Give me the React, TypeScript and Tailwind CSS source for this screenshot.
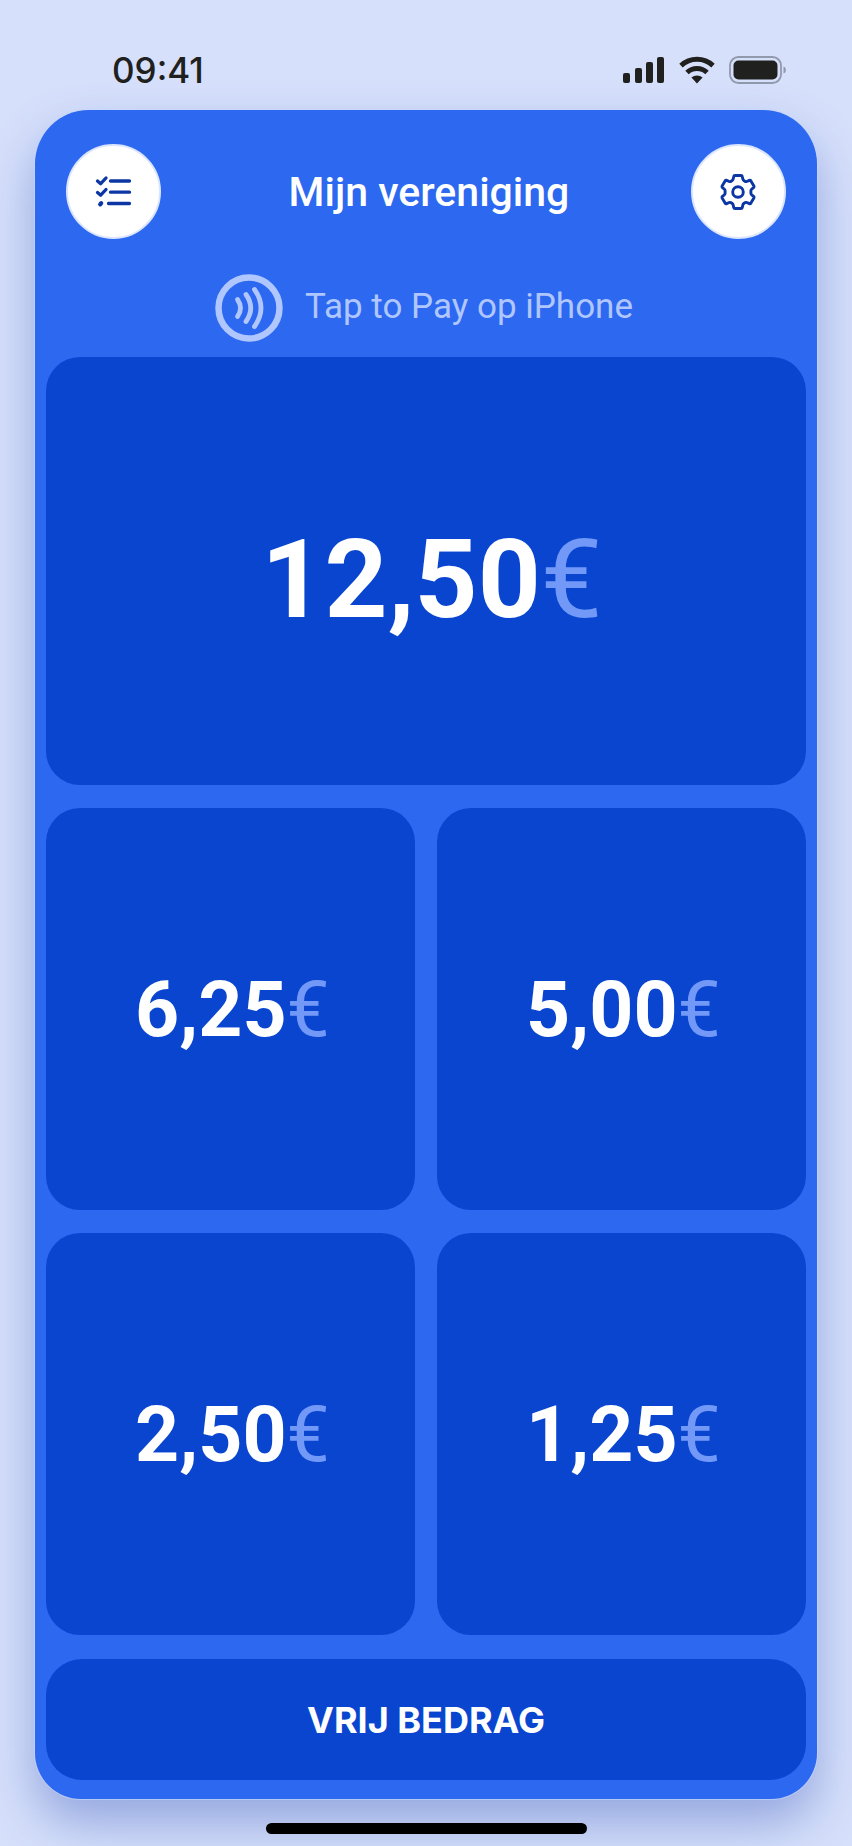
import React from 'react';

const amounts = [
  { id: 'a', value: '12,50', large: true },
  { id: 'b', value: '6,25' },
  { id: 'c', value: '5,00' },
  { id: 'd', value: '2,50' },
  { id: 'e', value: '1,25' },
];

function SignalIcon() {
  return (
    <svg width="42" height="28" viewBox="0 0 42 28" fill="#20201f">
      <rect x="0" y="17" width="7" height="10" rx="2" />
      <rect x="12" y="12" width="7" height="15" rx="2" />
      <rect x="23" y="6" width="7" height="21" rx="2" />
      <rect x="34" y="1" width="7" height="26" rx="2" />
    </svg>
  );
}

function WifiIcon() {
  return (
    <svg width="36" height="28" viewBox="0 0 36 28" fill="none" stroke="#20201f" strokeWidth="5">
      <path d="M2 9.6a23.5 23.5 0 0 1 32 0" />
      <path d="M8 16.5a14.5 14.5 0 0 1 20 0" />
      <path d="M12.4 21.6a8.4 8.4 0 0 1 11.2 0L18 27.4Z" fill="#20201f" stroke="none" />
    </svg>
  );
}

function BatteryIcon() {
  return (
    <svg width="58" height="28" viewBox="0 0 58 28">
      <rect x="1" y="1" width="51" height="26" rx="8.5" fill="none" stroke="#9199ad" strokeWidth="1.8" />
      <rect x="4.5" y="4.5" width="44" height="19" rx="5" fill="#20201f" />
      <path d="M54.5 10.5c3.2 1 3.2 6 0 7Z" fill="#9199ad" />
    </svg>
  );
}

function ChecklistIcon() {
  return (
    <svg width="38" height="34" viewBox="0 0 38 34" fill="none" stroke="#0b36a3" strokeWidth="3.3" strokeLinecap="round" strokeLinejoin="round">
      <path d="M2.500 6 5.700 8.700l5.300-5.700" />
      <path d="M2.500 17.500 5.700 20.200l5.300-5.700" />
      <path d="M5.200 29.400 6.200 28.200" strokeWidth="4.200" />
      <path d="M15.500 6h19M15.500 17.200h19M13.500 28.500h21" />
    </svg>
  );
}

function GearIcon() {
  return (
    <svg width="38" height="38" viewBox="0 0 38 38" fill="none" stroke="#0b36a3" strokeWidth="2.9" strokeLinejoin="round">
      <path d="M16 2.500h6q1.100 0 1.300 1.100l.6 2.700q.2.900 1 1.300l1.300.8q.8.400 1.600.1l2.500-1.100q1-.4 1.600.5l3 5.100q.5.900-.3 1.600l-1.900 1.500q-.8.600-.8 1.600v2.600q0 1 .8 1.600l1.900 1.500q.8.700.3 1.600l-3 5.100q-.6.900-1.600.5l-2.500-1.100q-.8-.3-1.600.1l-1.300.8q-.8.400-1 1.300l-.6 2.700q-.2 1.100-1.300 1.100h-6q-1.100 0-1.300-1.100l-.6-2.700q-.2-.9-1-1.300l-1.300-.8q-.8-.4-1.600-.1l-2.500 1.100q-1 .4-1.600-.5l-3-5.100q-.5-.9.3-1.600l1.900-1.500q.8-.6.800-1.600v-2.600q0-1-.8-1.600l-1.900-1.500q-.8-.7-.3-1.600l3-5.100q.6-.9 1.600-.5l2.500 1.100q.8.300 1.600-.1l1.300-.8q.8-.4 1-1.300l.6-2.700q.2-1.100 1.300-1.100Z" />
      <circle cx="19" cy="19" r="5.300" />
    </svg>
  );
}

function ContactlessIcon() {
  return (
    <svg width="68" height="68" viewBox="0 0 68 68" fill="none" stroke="#b0c6ff" strokeLinecap="round">
      <circle cx="34" cy="34" r="30.5" strokeWidth="6.5" />
      <g strokeWidth="4.8">
        <path d="M22.5 25.5q6 8.500 0 17" />
        <path d="M31 20.500q9.500 13.500 0 27" />
        <path d="M39.500 15.500q13 18.500 0 37" />
      </g>
    </svg>
  );
}

export default function App() {
  return (
    <div className="min-h-screen flex flex-col bg-[#d6e0fb] px-[35px] pt-14 pb-3 font-['Roboto',sans-serif]">
      <header className="h-[54px] flex items-start justify-between pl-[77px] pr-[30px]">
        <span className="font-['Inter',sans-serif] text-[35px] leading-7 font-medium text-[#20201f]">09:41</span>
        <div className="flex items-center gap-[14px]">
          <SignalIcon />
          <WifiIcon />
          <BatteryIcon />
        </div>
      </header>

      <main className="flex-1 flex flex-col bg-[#2c68f0] rounded-t-[54px] rounded-b-[46px] px-[11px] pt-[34px] pb-[19px] shadow-[0_0_0_1px_rgba(200,215,255,0.6),0_24px_48px_rgba(50,80,180,0.4)]">
        <div className="flex items-center justify-between px-5">
          <button aria-label="Transacties" className="size-[95px] rounded-full bg-white border-2 border-[#dbe5ff] flex items-center justify-center">
            <ChecklistIcon />
          </button>
          <h1 className="pl-1.5 text-[41px] leading-[48px] font-medium text-white">Mijn vereniging</h1>
          <button aria-label="Instellingen" className="size-[95px] rounded-full bg-white border-2 border-[#dbe5ff] flex items-center justify-center">
            <GearIcon />
          </button>
        </div>

        <div className="mt-[35px] mb-[15px] flex items-center justify-center gap-[22px]">
          <ContactlessIcon />
          <p className="pb-0.5 pr-1 text-[35px] leading-10 text-[#b0c6ff]">Tap to Pay op iPhone</p>
        </div>

        <div className="flex-1 grid grid-cols-2 grid-rows-[428fr_402fr_402fr] gap-x-[22px] gap-y-[23px]">
          {amounts.map((amount) => (
            <button
              key={amount.id}
              className={`rounded-[34px] bg-[#0a45d0] flex items-center justify-center font-bold text-white ${
                amount.large ? 'col-span-2 pt-4 pl-3 text-[110px]' : 'pt-1 pl-1 text-[77px]'
              }`}
            >
              <span>{amount.value}</span>
              <span className="font-normal text-[#7399f8]">€</span>
            </button>
          ))}
        </div>

        <button className="mt-6 h-[121px] rounded-[36px] bg-[#0a45d0] font-['Inter',sans-serif] text-[36px] font-bold text-white">
          VRIJ BEDRAG
        </button>
      </main>

      <div className="mt-6 h-[11px] w-[321px] self-center rounded-full bg-black" />
    </div>
  );
}
